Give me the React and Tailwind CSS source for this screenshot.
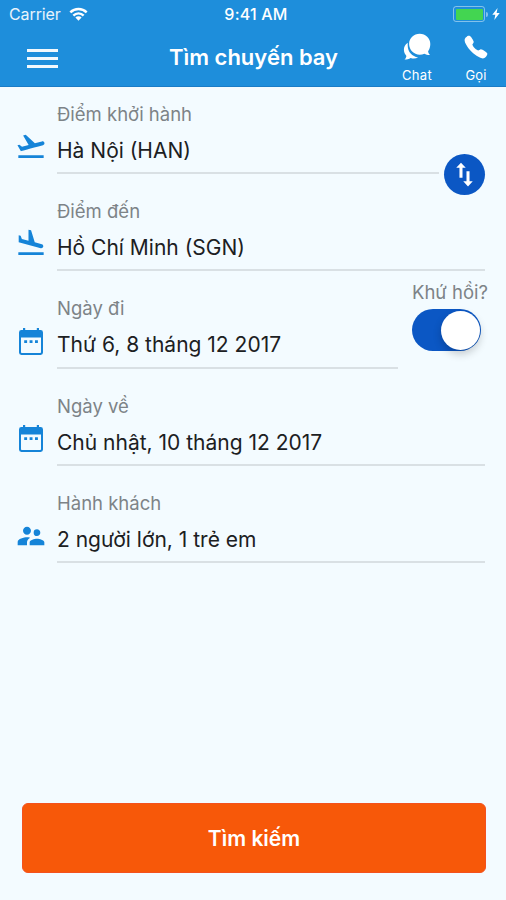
import { useState } from 'react'
import {
  MdFlightTakeoff,
  MdFlightLand,
  MdSupervisorAccount,
} from 'react-icons/md'
import { IoCall } from 'react-icons/io5'

const CalendarIcon = ({ className }) => (
  <svg viewBox="0 0 26 28" className={className} fill="currentColor">
    <path
      fillRule="evenodd"
      d="M5 0h2.200v2h11.600V0H21v2h1.600A2.400 2.400 0 0 1 25 4.400v20.200A2.400 2.400 0 0 1 22.600 27H3.400A2.400 2.400 0 0 1 1 24.600V4.400A2.400 2.400 0 0 1 3.400 2H5zM3 9.500v14.700c0 .5.300.8.800.8h18.400c.5 0 .8-.3.800-.8V9.500z"
    />
    <path d="M6.200 12.300h2.900v2.700H6.200zM11.600 12.300h2.900v2.700h-2.900zM17 12.300h2.900v2.700H17z" />
  </svg>
)

const ChatIcon = ({ className }) => (
  <svg viewBox="0 0 28 28" className={className} fill="currentColor">
    <path d="M4.700 9.800C2 11.600.9 14 .9 16.800c0 2.500 1.100 4.600 2.500 6.100-.2 1.500-.9 2.700-2 3.700 2.500 0 4.500-.5 6.300-1.700 2.300.8 5.100.7 7.400-.5C9.300 23.600 4.700 19 4.700 12.500z" />
    <path d="M16.700.8C10.800.8 6.100 5.200 6.100 11s4.700 10.700 10.600 10.700c1.700 0 3.300-.4 4.700-1 1.600 1 3.500 1.500 5.700 1.400-1.200-1-1.900-2.300-2-3.800 1.400-1.900 2.200-4.400 2.200-7.300C27.300 5.200 22.600.8 16.700.8z" />
  </svg>
)

const SwapIcon = ({ className }) => (
  <svg viewBox="0 0 20 26" className={className} fill="currentColor">
    <path d="M6.300.5 11.300 6H7.900v10.500H4.700V6H1.300z" />
    <path d="M13.700 25.500 18.700 20h-3.400V9.500h-3.200V20H8.700z" />
  </svg>
)

const WifiIcon = ({ className }) => (
  <svg viewBox="0 0 20 14" className={className} fill="none" stroke="currentColor" strokeWidth="2.600">
    <path d="M1.400 5.200c4.800-4.700 12.400-4.700 17.200 0" />
    <path d="M4.600 8.600c3-3 7.800-3 10.800 0" />
    <path d="M10 14 6.700 10.800a4.600 4.600 0 0 1 6.600 0z" fill="currentColor" stroke="none" />
  </svg>
)

const fields = [
  {
    id: 'from',
    label: 'Điểm khởi hành',
    value: 'Hà Nội (HAN)',
    icon: MdFlightTakeoff,
    iconClass: 'h-[32px] w-[32px] -translate-x-[3px] -translate-y-[4px]',
    lineClass: 'mr-[67px]',
  },
  {
    id: 'to',
    label: 'Điểm đến',
    value: 'Hồ Chí Minh (SGN)',
    icon: MdFlightLand,
    iconClass: 'h-[32px] w-[32px] -translate-x-[3px] -translate-y-[4px]',
    lineClass: 'mr-[21px]',
  },
  {
    id: 'depart',
    label: 'Ngày đi',
    value: 'Thứ 6, 8 tháng 12 2017',
    icon: CalendarIcon,
    iconClass: 'h-[28px] w-[26px] -translate-y-[5px]',
    lineClass: 'mr-[108px]',
  },
  {
    id: 'return',
    label: 'Ngày về',
    value: 'Chủ nhật, 10 tháng 12 2017',
    icon: CalendarIcon,
    iconClass: 'h-[28px] w-[26px] -translate-y-[5px]',
    lineClass: 'mr-[21px]',
  },
  {
    id: 'passengers',
    label: 'Hành khách',
    value: '2 người lớn, 1 trẻ em',
    icon: MdSupervisorAccount,
    iconClass: 'h-[32px] w-[32px] -translate-x-[3px] -translate-y-[3px]',
    lineClass: 'mr-[21px]',
  },
]

const App = () => {
  const [roundTrip, setRoundTrip] = useState(true)

  return (
    <div className="flex h-[900px] w-full flex-col overflow-hidden bg-[#f3fbff] font-['Inter','Noto_Sans',sans-serif]">
      {/* Header */}
      <header className="h-[87px] shrink-0 border-b border-[#1a7cc6] bg-[#1e8edb] text-white">
        <div className="relative flex h-[28px] items-center justify-between pl-[9px] pr-[6px]">
          <div className="flex items-center gap-[8px]">
            <span className="text-[16px] leading-[28px] tracking-[-0.1px] text-white/90">Carrier</span>
            <WifiIcon className="h-[14px] w-[19px]" />
          </div>
          <span className="absolute inset-x-0 text-center text-[16px] font-medium leading-[29px] tracking-[0.2px]">
            <span className="pl-[6px]">9:41 AM</span>
          </span>
          <div className="flex items-center">
            <div className="h-[16px] w-[32px] rounded-[3px] border border-white/45 p-[1.500px]">
              <div className="h-full w-full rounded-[1px] bg-[#43d551]" />
            </div>
            <div className="ml-px h-[5px] w-[2px] rounded-r-full bg-white/45" />
            <svg viewBox="0 0 8 12" className="ml-[4px] h-[12px] w-[8px]" fill="currentColor">
              <path d="M5.600 0 .3 6.800h3L2.300 12l5.400-7H4.600z" />
            </svg>
          </div>
        </div>

        <div className="relative flex h-[58px] justify-between pl-[27px] pr-[18px]">
          <button className="flex h-[19px] w-[31px] translate-y-[21px] flex-col justify-between" aria-label="Menu">
            <span className="h-[3px] w-full bg-white/95" />
            <span className="h-[3px] w-full bg-white/95" />
            <span className="h-[3px] w-full bg-white/95" />
          </button>
          <h1 className="pointer-events-none absolute inset-x-0 top-[14px] pl-[1px] text-center text-[22px] font-semibold leading-[30px]">
            Tìm chuyến bay
          </h1>
          <div className="flex gap-[30px]">
            <button className="flex w-[34px] flex-col items-center pt-[5px]">
              <ChatIcon className="h-[28px] w-[28px]" />
              <span className="mt-[6px] text-[13px] leading-[16px] tracking-[0.3px]">Chat</span>
            </button>
            <button className="flex w-[24px] flex-col items-center pt-[6px]">
              <IoCall className="h-[26px] w-[26px]" />
              <span className="mt-[7px] text-[13px] leading-[16px] tracking-[0.2px]">Gọi</span>
            </button>
          </div>
        </div>
      </header>

      {/* Search form */}
      <main className="flex flex-1 flex-col gap-[21px] pt-[11px]">
        {fields.map((field) => (
          <div key={field.id} className="relative flex h-[76.200px]">
            <div className="flex w-[57px] shrink-0 items-end pb-[8px] pl-[18px] text-[#1584d8]">
              <field.icon className={`shrink-0 ${field.iconClass}`} />
            </div>
            <div className={`flex-1 border-b-2 border-[#d9e0e4] ${field.lineClass}`}>
              <p className="h-[34px] whitespace-nowrap text-[18.500px] leading-[33.400px] text-[#7d8387]">{field.label}</p>
              <p className="h-[36px] whitespace-nowrap text-[21px] leading-[37px] text-[#1c2022]">{field.value}</p>
            </div>

            {field.id === 'from' && (
              <button
                className="absolute right-[21px] top-[56px] flex h-[41px] w-[41px] items-center justify-center rounded-full bg-[#0b57c4] text-white"
                aria-label="Swap"
              >
                <SwapIcon className="h-[25px] w-[19px]" />
              </button>
            )}

            {field.id === 'depart' && (
              <div className="absolute right-[17px] top-[-14px] w-[77px]">
                <p className="whitespace-nowrap text-[18.500px] leading-[28px] text-[#7d8387]">Khứ hồi?</p>
                <button
                  onClick={() => setRoundTrip(!roundTrip)}
                  className={`mt-[3px] flex h-[42px] w-[69px] items-center rounded-full p-[1px] ${
                    roundTrip ? 'justify-end bg-[#0b57c4]' : 'justify-start bg-slate-300'
                  }`}
                  role="switch"
                  aria-checked={roundTrip}
                >
                  <span className="h-[39px] w-[39px] rounded-full bg-white shadow-[0_4px_8px_rgba(0,0,0,0.2)]" />
                </button>
              </div>
            )}
          </div>
        ))}
      </main>

      {/* Submit */}
      <footer className="pb-[27px] pl-[22px] pr-[20px]">
        <button className="h-[70px] w-full rounded-[6px] border border-[#f4511e] bg-[#f75809] pt-[2px] text-[21px] font-semibold text-white">
          Tìm kiếm
        </button>
      </footer>
    </div>
  )
}

export default App
